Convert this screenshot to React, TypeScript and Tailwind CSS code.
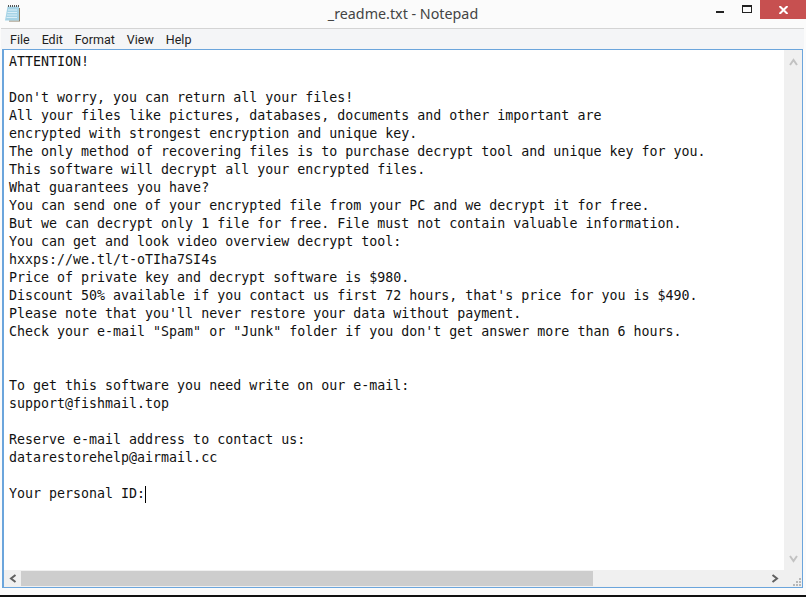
const lines = [
  'ATTENTION!',
  '',
  "Don't worry, you can return all your files!",
  'All your files like pictures, databases, documents and other important are',
  'encrypted with strongest encryption and unique key.',
  'The only method of recovering files is to purchase decrypt tool and unique key for you.',
  'This software will decrypt all your encrypted files.',
  'What guarantees you have?',
  'You can send one of your encrypted file from your PC and we decrypt it for free.',
  'But we can decrypt only 1 file for free. File must not contain valuable information.',
  'You can get and look video overview decrypt tool:',
  'hxxps://we.tl/t-oTIha7SI4s',
  'Price of private key and decrypt software is $980.',
  "Discount 50% available if you contact us first 72 hours, that's price for you is $490.",
  "Please note that you'll never restore your data without payment.",
  'Check your e-mail "Spam" or "Junk" folder if you don\'t get answer more than 6 hours.',
  '',
  '',
  'To get this software you need write on our e-mail:',
  'support@fishmail.top',
  '',
  'Reserve e-mail address to contact us:',
  'datarestorehelp@airmail.cc',
  '',
]

function NotepadIcon() {
  return (
    <svg width="16" height="17" viewBox="0 0 16 17">
      <path d="M5 15.500h10V3h1v13.500H5z" fill="#8b7f66" />
      <path d="M3.500 1.500H15v14H1z" fill="#a5d3e6" />
      <path d="M4 5h9M3.500 7.500h9.500M3 10h10M2.500 12.500h10.500" stroke="#d9eef7" strokeWidth="1" />
      <path d="M4 1h11" stroke="#555" strokeWidth="2" strokeDasharray="1 1" />
    </svg>
  )
}

function Arrow({ d, color }: { d: string; color: string }) {
  return (
    <svg width="9" height="8" viewBox="0 0 9 8">
      <path d={d} fill="none" stroke={color} strokeWidth="2" />
    </svg>
  )
}

export default function App() {
  return (
    <div className="w-[806px] h-[597px] bg-[#fbfbfb] flex flex-col overflow-hidden font-['Noto_Sans',sans-serif]">
      {/* Title bar */}
      <div className="h-[28px] shrink-0 pl-[4px] flex items-start">
        <div className="w-[112px] pt-[5px]">
          <NotepadIcon />
        </div>
        <div className="flex-1 pt-[3px] text-center text-[14.3px] leading-[22px] text-[#444]">_readme.txt - Notepad</div>
        <div className="w-[116px] flex justify-end">
          <div className="w-[26px] h-[19px] pt-[11px]">
            <div className="w-[8px] h-[2px] bg-[#222]" />
          </div>
          <div className="w-[18px] h-[19px] pt-[5px]">
            <div className="w-[10px] h-[8px] border border-t-[2px] border-[#222]" />
          </div>
          <div className="w-[46px] h-[19px] bg-[#c75050] flex items-center justify-center">
            <svg width="9" height="8" viewBox="0 0 9 8">
              <path d="M.5 0l8 8M8.500 0l-8 8" stroke="#fff" strokeWidth="2" />
            </svg>
          </div>
        </div>
      </div>

      {/* Menu bar */}
      <div className="h-[21px] shrink-0 ml-[1px] mr-[2px] border-t border-[#d4d4d4] bg-[#f4f5f7] flex pl-[9px] gap-[12px] font-['Roboto',sans-serif] text-[12.5px] leading-[21px] text-[#1e1e1e]">
        <span>File</span>
        <span>Edit</span>
        <span>Format</span>
        <span>View</span>
        <span>Help</span>
      </div>

      {/* Editor */}
      <div className="w-[801px] ml-[2px] h-[539px] shrink-0 border border-l-2 border-[#6ba5dc] bg-white flex flex-col">
        <div className="flex-1 min-h-0 flex">
          <div className="flex-1 pt-[3px] pl-[5px] font-['DejaVu_Sans_Mono',monospace] text-[13.3px] leading-[18px] text-[#111] whitespace-pre">
            {lines.map((l, i) => (
              <div key={i} className="h-[18px]">{l}</div>
            ))}
            <div className="h-[18px] flex items-center">
              Your personal ID:<span className="w-px h-[17px] bg-black" />
            </div>
          </div>
          <div className="w-[18px] bg-[#f0f0f0] flex flex-col items-center justify-between pt-[8px] pb-[7px]">
            <Arrow d="M1 7l3.500-5 3.500 5" color="#c2c2c2" />
            <Arrow d="M1 1l3.500 5 3.500-5" color="#c2c2c2" />
          </div>
        </div>
        <div className="h-[17px] shrink-0 bg-[#f0f0f0] flex items-center">
          <div className="w-[17px] flex justify-center">
            <svg width="8" height="9" viewBox="0 0 8 9">
              <path d="M6.500 1L2 4.500 6.500 8" fill="none" stroke="#606060" strokeWidth="2" />
            </svg>
          </div>
          <div className="w-[572px] h-[15px] mb-px bg-[#cdcdcd]" />
          <div className="flex-1" />
          <div className="w-[18px] flex justify-center">
            <svg width="8" height="9" viewBox="0 0 8 9">
              <path d="M1.500 1L6 4.500 1.500 8" fill="none" stroke="#606060" strokeWidth="2" />
            </svg>
          </div>
          <div className="w-[18px] h-[17px] flex items-end justify-end pr-[1px] pb-[1px]">
            <svg width="8" height="8" viewBox="0 0 8 8">
              <path d="M6 0h2v2H6zM3 3h2v2H3zM6 3h2v2H6zM0 6h2v2H0zM3 6h2v2H3zM6 6h2v2H6z" fill="#b8b8b8" />
            </svg>
          </div>
        </div>
      </div>

      <div className="h-[7px] shrink-0 bg-[#fbfbfb]" />
      <div className="flex-1 bg-[#111]" />
    </div>
  )
}
